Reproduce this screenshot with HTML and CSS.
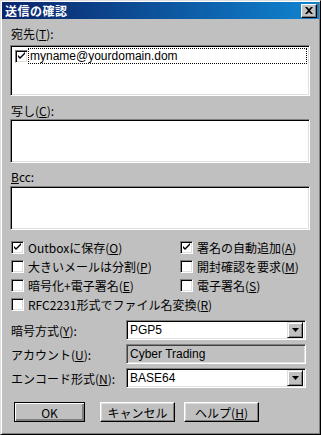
FILE: index.html
```html
<!DOCTYPE html>
<html lang="ja">
<head>
    <meta charset="UTF-8">
    <title>送信の確認</title>
    <link rel="stylesheet" href="styles.css">
</head>
<body>
    <div class="window">
        <div class="titlebar">
            <span class="title">送信の確認</span>
            <span class="close">
                <svg width="8" height="7" viewBox="0 0 8 7"><path d="M0 0h2l2 2 2-2h2L5 3.5 8 7H6L4 5 2 7H0l3-3.5z" fill="#000"/></svg>
            </span>
        </div>
        <div class="content">
            <div class="label first">宛先(<u>T</u>):</div>
            <div class="field to">
                <div class="item">
                    <span class="check on"></span>
                    <span class="focus">myname@yourdomain.dom</span>
                </div>
            </div>

            <div class="label cc">写し(<u>C</u>):</div>
            <div class="field small cc-box"></div>

            <div class="label bcc"><u>B</u>cc:</div>
            <div class="field small bcc-box"></div>

            <div class="options">
                <label class="opt"><span class="check on"></span><span>Outboxに保存(<u>O</u>)</span></label>
                <label class="opt right"><span class="check on"></span><span>署名の自動追加(<u>A</u>)</span></label>
                <label class="opt"><span class="check"></span><span>大きいメールは分割(<u>P</u>)</span></label>
                <label class="opt right"><span class="check"></span><span>開封確認を要求(<u>M</u>)</span></label>
                <label class="opt"><span class="check"></span><span>暗号化+電子署名(<u>E</u>)</span></label>
                <label class="opt right"><span class="check"></span><span>電子署名(<u>S</u>)</span></label>
                <label class="opt wide"><span class="check"></span><span>RFC2231形式でファイル名変換(<u>R</u>)</span></label>
            </div>

            <div class="form">
                <div class="flabel"><span>暗号方式(<u>Y</u>):</span></div>
                <div class="combo"><span class="value">PGP5</span><span class="arrow"></span></div>
                <div class="flabel"><span>アカウント(<u>U</u>):</span></div>
                <div class="combo readonly"><span class="value">Cyber Trading</span></div>
                <div class="flabel"><span>エンコード形式(<u>N</u>):</span></div>
                <div class="combo"><span class="value">BASE64</span><span class="arrow"></span></div>
            </div>

            <div class="buttons">
                <button class="btn default">OK</button>
                <button class="btn cancel">キャンセル</button>
                <button class="btn">ヘルプ(<u>H</u>)</button>
            </div>
        </div>
    </div>
</body>
</html>
```

FILE: styles.css
```css
html, body {
    margin: 0;
    padding: 0;
    background: #c0c0c0;
}
body {
    font-family: "Noto Sans CJK JP", sans-serif;
    font-size: 12px;
    color: #000;
}
u {
    text-decoration: underline;
    text-underline-offset: 1px;
}
.window {
    box-sizing: border-box;
    width: 321px;
    height: 435px;
    padding: 1px;
    background: #c0c0c0;
    border: 1px solid;
    border-color: #dfdfdf #000 #000 #dfdfdf;
    box-shadow: inset 1px 1px #fff, inset -1px -1px #808080;
}
.titlebar {
    height: 17px;
    display: flex;
    align-items: center;
    justify-content: space-between;
    padding: 0 2px 0 3px;
    background: linear-gradient(to right, #0a246a, #1084d0);
    color: #fff;
}
.title {
    font-weight: bold;
    font-size: 12px;
    line-height: 17px;
    letter-spacing: 0.5px;
}
.close {
    box-sizing: border-box;
    width: 16px;
    height: 14px;
    display: flex;
    align-items: center;
    justify-content: center;
    background: #c0c0c0;
    border: 1px solid;
    border-color: #fff #000 #000 #fff;
    box-shadow: inset -1px -1px #808080;
}
.content {
    padding: 0 9px 0 8px;
}
.label {
    height: 14px;
    line-height: 14px;
    padding-left: 1px;
}
.label.first { margin-top: 8px; }
.label.cc { margin-top: 8px; }
.label.bcc { margin-top: 7px; }

.field {
    box-sizing: border-box;
    background: #fff;
    border: 1px solid;
    border-color: #808080 #fff #fff #808080;
    box-shadow: inset 1px 1px #000, inset -1px -1px #dfdfdf;
}
.to {
    margin-top: 4px;
    height: 51px;
    padding: 2px 2px;
}
.cc-box {
    margin-top: 1px;
    height: 44px;
}
.bcc-box {
    margin-top: 2px;
    height: 44px;
}
.item {
    display: flex;
    align-items: center;
    height: 16px;
    padding-left: 2px;
}
.focus {
    flex: 1;
    height: 16px;
    line-height: 15px;
    box-sizing: border-box;
    border: 1px dotted #000;
    padding-left: 1px;
    font-family: "Liberation Sans", Arial, sans-serif;
    font-size: 12px;
}

.check {
    box-sizing: border-box;
    width: 13px;
    height: 13px;
    flex: none;
    background: #fff;
    border: 1px solid;
    border-color: #808080 #fff #fff #808080;
    box-shadow: inset 1px 1px #000, inset -1px -1px #dfdfdf;
    display: inline-block;
}
.check.on {
    background: #fff url("data:image/svg+xml;utf8,<svg xmlns='http://www.w3.org/2000/svg' width='11' height='11'><path d='M2 4v2l2 2 5-5V1L4 6z' fill='black'/></svg>") no-repeat center;
}

.options {
    margin-top: 8px;
    display: grid;
    grid-template-columns: 169px 1fr;
    grid-auto-rows: 19px;
}
.opt {
    display: flex;
    align-items: center;
    gap: 4px;
    padding-left: 1px;
    white-space: nowrap;
}
.opt.wide {
    grid-column: 1 / 3;
}

.form {
    margin-top: 6px;
    display: grid;
    grid-template-columns: 116px 180px;
    grid-auto-rows: 20px;
    row-gap: 4px;
}
.flabel {
    display: flex;
    align-items: center;
    padding-left: 1px;
    white-space: nowrap;
}
.combo {
    box-sizing: border-box;
    display: flex;
    align-items: center;
    justify-content: space-between;
    background: #fff;
    border: 1px solid;
    border-color: #808080 #fff #fff #808080;
    box-shadow: inset 1px 1px #000, inset -1px -1px #dfdfdf;
    padding: 2px 2px 2px 3px;
    font-family: "Liberation Sans", Arial, sans-serif;
    font-size: 12px;
}
.combo.readonly {
    background: #c0c0c0;
    box-shadow: inset 1px 1px #404040, inset -1px -1px #dfdfdf;
}
.arrow {
    box-sizing: border-box;
    width: 16px;
    height: 16px;
    background: #c0c0c0 url("data:image/svg+xml;utf8,<svg xmlns='http://www.w3.org/2000/svg' width='7' height='4'><path d='M0 0h7L3.5 4z' fill='black'/></svg>") no-repeat center;
    border: 1px solid;
    border-color: #dfdfdf #000 #000 #dfdfdf;
    box-shadow: inset 1px 1px #fff, inset -1px -1px #808080;
}

.buttons {
    margin-top: 14px;
    display: flex;
    padding-left: 4px;
}
.btn {
    box-sizing: border-box;
    width: 75px;
    height: 20px;
    padding: 0;
    margin: 0;
    font-family: "Noto Sans CJK JP", sans-serif;
    font-size: 12px;
    color: #000;
    background: #c0c0c0;
    border: 1px solid;
    border-color: #fff #000 #000 #fff;
    box-shadow: inset -1px -1px #808080, inset 1px 1px #dfdfdf;
}
.btn.default {
    width: 71px;
    border-color: #000;
    box-shadow: inset 1px 1px #fff, inset -2px -2px #808080, inset -1px -1px #000;
}
.btn.cancel {
    margin-left: 15px;
    margin-right: 9px;
}
```
